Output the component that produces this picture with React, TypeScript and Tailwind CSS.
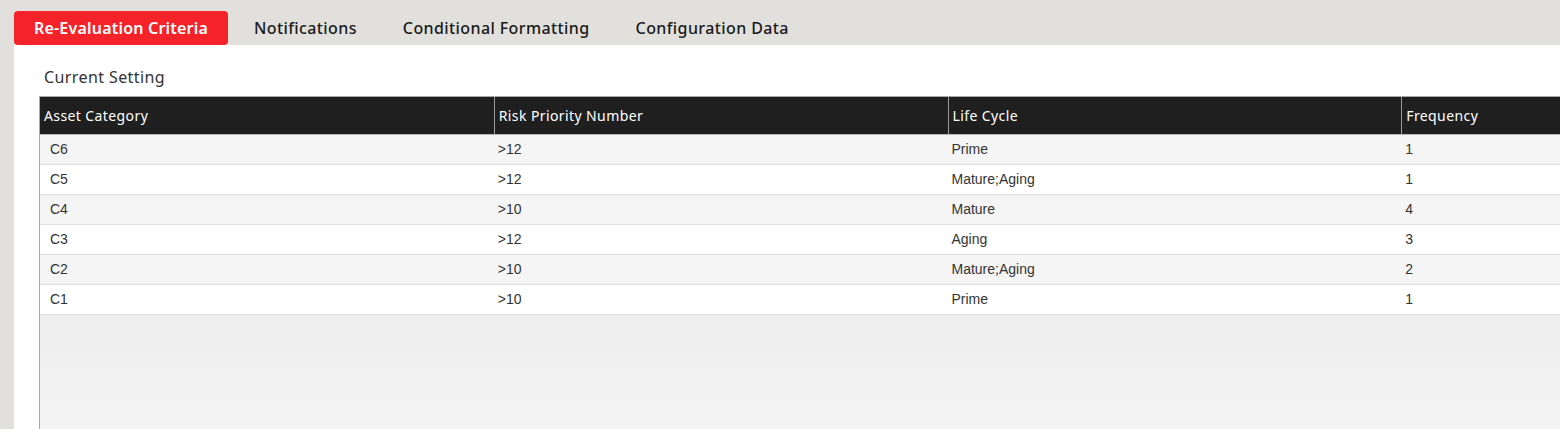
import React from "react";

const tabs = ["Re-Evaluation Criteria", "Notifications", "Conditional Formatting", "Configuration Data"];

const columns = ["Asset Category", "Risk Priority Number", "Life Cycle", "Frequency"];

const rows = [
    ["C6", ">12", "Prime", "1"],
    ["C5", ">12", "Mature;Aging", "1"],
    ["C4", ">10", "Mature", "4"],
    ["C3", ">12", "Aging", "3"],
    ["C2", ">10", "Mature;Aging", "2"],
    ["C1", ">10", "Prime", "1"],
];

const tabFont = { fontFamily: '"Noto Sans", "Open Sans", sans-serif' };

export default function App() {
    return (
        <div className="w-[1560px] h-[429px] overflow-hidden bg-[#e1e0dc] flex flex-col">
            {/* Tab strip */}
            <div className="h-[45px] shrink-0 flex items-end gap-[6px] pl-[14px]">
                {tabs.map((tab, i) => (
                    <div
                        key={tab}
                        className={`h-[34px] px-[20px] flex items-center text-[16px] ${i === 0
                            ? "bg-[#f5222a] text-white rounded-[4px] font-semibold tracking-[0.2px]"
                            : "text-[#1a1a1a] font-medium tracking-[0.4px]"
                            }`}
                        style={tabFont}
                    >
                        {tab}
                    </div>
                ))}
            </div>

            {/* Panel */}
            <div className="flex-1 ml-[14px] bg-white pl-[25px] pt-[22px] flex flex-col min-h-0">
                <div className="h-[20px] leading-[20px] pl-[5px] text-[16px] tracking-[0.4px] text-[#333]" style={tabFont}>
                    Current Setting
                </div>

                <div className="mt-[9px] flex-1 border-l border-t border-[#a9a9a9] flex flex-col min-h-0 w-[1816px]">
                    {/* Header */}
                    <div className="h-[38px] shrink-0 bg-[#1f1f1f] border-b border-[#b5b5b5] flex">
                        {columns.map((col, i) => (
                            <div
                                key={col}
                                className={`w-[454px] h-full flex items-center pl-[4px] text-[14px] tracking-[0.4px] text-white ${i > 0 ? "border-l border-[#9a9a9a]" : ""}`}
                                style={tabFont}
                            >
                                {col}
                            </div>
                        ))}
                    </div>

                    {/* Body */}
                    {rows.map((row, r) => (
                        <div
                            key={r}
                            className={`h-[30px] shrink-0 flex border-b border-[#dddddd] ${r % 2 === 0 ? "bg-[#f5f5f5]" : "bg-white"}`}
                        >
                            {row.map((cell, c) => (
                                <div
                                    key={c}
                                    className={`w-[454px] flex items-center text-[14px] text-[#333] ${c === 0 ? "pl-[10px]" : "pl-[4px]"}`}
                                    style={{ fontFamily: '"Liberation Sans", Arial, sans-serif' }}
                                >
                                    {cell}
                                </div>
                            ))}
                        </div>
                    ))}

                    <div className="flex-1 bg-gradient-to-b from-[#ededed] to-[#f4f4f4]" />
                </div>
            </div>
        </div>
    );
}
